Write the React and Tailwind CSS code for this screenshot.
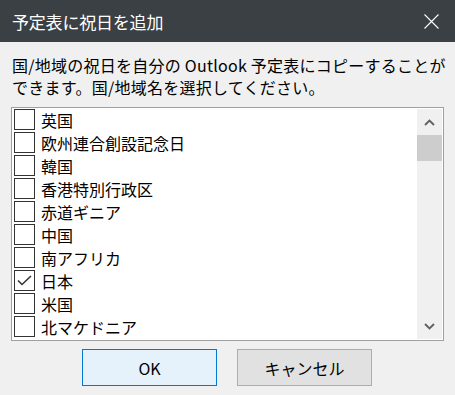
const items = [
  { name: '英国', checked: false },
  { name: '欧州連合創設記念日', checked: false },
  { name: '韓国', checked: false },
  { name: '香港特別行政区', checked: false },
  { name: '赤道ギニア', checked: false },
  { name: '中国', checked: false },
  { name: '南アフリカ', checked: false },
  { name: '日本', checked: true },
  { name: '米国', checked: false },
  { name: '北マケドニア', checked: false },
];

function Checkbox({ checked }) {
  return (
    <div className="w-[21px] h-[21px] border border-[#333333] bg-white flex items-center justify-center shrink-0">
      {checked && (
        <svg width="15" height="11" viewBox="0 0 15 11" fill="none">
          <path d="M1 5.5 L5 9.5 L14 1" stroke="#333333" strokeWidth="1.6" />
        </svg>
      )}
    </div>
  );
}

export default function App() {
  return (
    <div
      className="w-[455px] h-[395px] bg-[#f0f0f0] flex flex-col overflow-hidden"
      style={{ fontFamily: '"Noto Sans CJK JP", "Noto Sans", sans-serif' }}
    >
      {/* Title bar */}
      <div className="h-[42px] bg-[#3a4044] flex items-center justify-between pl-[12px] pr-[16px] shrink-0">
        <span className="text-white text-[17px] leading-none tracking-[-0.2px]">予定表に祝日を追加</span>
        <svg width="15" height="15" viewBox="0 0 15 15" fill="none">
          <path d="M0.5 0.5 L14.5 14.5 M14.5 0.5 L0.5 14.5" stroke="#ffffff" strokeWidth="1.1" />
        </svg>
      </div>

      {/* Description */}
      <div className="px-[12px] pt-[12px] text-[16px] leading-[22px] text-black whitespace-nowrap tracking-[0.25px]">
        <div>国/地域の祝日を自分の Outlook 予定表にコピーすることが</div>
        <div>できます。国/地域名を選択してください。</div>
      </div>

      {/* List */}
      <div className="mx-[11px] mt-[9px] h-[234px] border border-[#a0a0a0] bg-white flex">
        <div className="flex-1 pl-[2px] pt-[1px] flex flex-col gap-[2px]">
          {items.map((it) => (
            <div key={it.name} className="h-[21px] flex items-center gap-[6px]">
              <Checkbox checked={it.checked} />
              <span className="text-[16px] leading-none text-black">{it.name}</span>
            </div>
          ))}
        </div>
        <div className="w-[25px] my-[1px] mr-[1px] bg-[#f0f0f0] flex flex-col items-center">
          <div className="h-[26px] flex items-center justify-center">
            <svg width="11" height="7" viewBox="0 0 11 7" fill="none">
              <path d="M1 6 L5.5 1.5 L10 6" stroke="#606060" strokeWidth="1.8" />
            </svg>
          </div>
          <div className="w-full h-[26px] bg-[#cdcdcd]" />
          <div className="flex-1" />
          <div className="h-[26px] flex items-center justify-center">
            <svg width="11" height="7" viewBox="0 0 11 7" fill="none">
              <path d="M1 1 L5.5 5.5 L10 1" stroke="#606060" strokeWidth="1.8" />
            </svg>
          </div>
        </div>
      </div>

      {/* Buttons */}
      <div className="flex gap-[20px] pl-[82px] mt-[8px]">
        <button className="w-[135px] h-[37px] border border-[#0078d7] bg-[#e5f1fb] text-[16px] text-black">
          OK
        </button>
        <button className="w-[135px] h-[37px] border border-[#adadad] bg-[#e1e1e1] text-[16px] text-black">
          キャンセル
        </button>
      </div>
    </div>
  );
}
